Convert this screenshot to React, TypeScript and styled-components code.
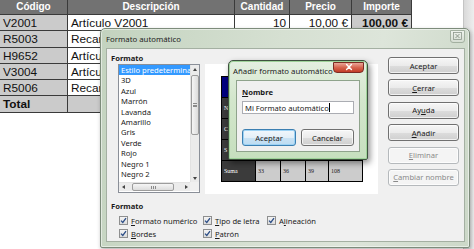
import styled, { createGlobalStyle } from "styled-components";

const Global = createGlobalStyle`
  html, body {
    margin: 0;
    padding: 0;
    background: #ffffff;
    overflow: hidden;
  }
`;

const ui = `"Noto Sans", "Open Sans", sans-serif`;

const Page = styled.div`
  position: relative;
  width: 474px;
  height: 249px;
  overflow: hidden;
  display: flex;
  font-family: "Liberation Sans", Arial, sans-serif;
`;

const SheetArea = styled.div`
  flex: 1;
  background: #fff;
`;

const EdgeStrip = styled.div`
  width: 10px;
  background: linear-gradient(90deg, #d9d9d9, #eeeeee);
  border-left: 1px solid #c4c4c4;
`;

const Sheet = styled.div`
  display: grid;
  grid-template-columns: 68px 167px 55px 62px 60px;
  grid-template-rows: 15px 16px 17px 16px 16px 16px 17px;
  width: 412px;
`;

const Cell = styled.div<{ $kind?: "head" | "gray" | "white"; $align?: "left" | "right" | "center"; $bold?: boolean }>`
  box-sizing: border-box;
  border-right: 1px solid #3a3a3a;
  border-bottom: 1px solid #3a3a3a;
  background: ${(p) => (p.$kind === "head" ? "#727272" : p.$kind === "gray" ? "#cbcbcb" : "#ffffff")};
  color: ${(p) => (p.$kind === "head" ? "#ffffff" : "#111111")};
  font-size: ${(p) => (p.$kind === "head" ? "10px" : "11.8px")};
  font-weight: ${(p) => (p.$bold || p.$kind === "head" ? 700 : 400)};
  text-align: ${(p) => p.$align || "left"};
  padding: 0 3px;
  line-height: ${(p) => (p.$kind === "head" ? "14px" : "16px")};
  white-space: nowrap;
  overflow: hidden;
`;

/* ---------- dialog windows ---------- */

const Window = styled.div<{ $left: number; $top: number; $w: number; $h: number; $active?: boolean }>`
  position: absolute;
  left: ${(p) => p.$left}px;
  top: ${(p) => p.$top}px;
  width: ${(p) => p.$w}px;
  height: ${(p) => p.$h}px;
  box-sizing: border-box;
  display: flex;
  flex-direction: column;
  border: 1px solid ${(p) => (p.$active ? "#3f523f" : "#7d8c7b")};
  border-radius: 5px 5px 2px 2px;
  background: ${(p) =>
    p.$active
      ? "linear-gradient(180deg, #e4efe0 0%, #d3e6cc 40%, #c6dfbe 100%)"
      : "linear-gradient(100deg, #c3d3bf 0%, #d6e0d2 45%, #dde5da 70%, #ccd8c8 100%)"};
  box-shadow: ${(p) =>
    p.$active
      ? "inset 0 0 0 1px #9fd39a, 2px 3px 6px rgba(0,0,0,0.45)"
      : "inset 0 0 0 1px rgba(255,255,255,0.5), 1px 2px 4px rgba(0,0,0,0.3)"};
  font-family: ${ui};
  font-size: 7.6px;
  color: #1a1a1a;
`;

const TitleBar = styled.div<{ $pad: number }>`
  height: 19px;
  flex-shrink: 0;
  display: flex;
  align-items: center;
  justify-content: space-between;
  padding-left: ${(p) => p.$pad}px;
  padding-right: 3px;
  font-size: 7.8px;
  color: #222;
`;

const GhostClose = styled.div`
  width: 15px;
  height: 13px;
  margin-top: -5px;
  margin-right: 1px;
  box-sizing: border-box;
  border: 1px solid #a3b0a0;
  border-radius: 0 0 3px 3px;
  background: linear-gradient(180deg, #eef2ec, #d6ded3);
  display: flex;
  align-items: center;
  justify-content: center;
`;

const RedClose = styled.div`
  width: 31px;
  height: 11px;
  margin-top: -7px;
  box-sizing: border-box;
  border: 1px solid #7b2b22;
  border-radius: 0 0 4px 4px;
  background: linear-gradient(180deg, #eaa698 0%, #d6654f 50%, #c23b25 100%);
  display: flex;
  align-items: center;
  justify-content: center;
`;

const MainBody = styled.div`
  flex: 1;
  margin: 0 4px 5px 5px;
  box-sizing: border-box;
  border: 1px solid #a4b0a2;
  background: #f0f0f0;
  display: flex;
`;

const LeftCol = styled.div`
  flex: 1;
  padding: 4px 0 0 4px;
  display: flex;
  flex-direction: column;
`;

const GroupLabel = styled.div`
  font-weight: 700;
  height: 11px;
  line-height: 11px;
`;

const TopRow = styled.div`
  display: flex;
  gap: 5px;
  margin-left: 7px;
`;

const ListBox = styled.div`
  width: 82px;
  height: 129px;
  box-sizing: border-box;
  border: 1px solid #8a8f98;
  background: #fff;
  display: grid;
  grid-template-columns: 71px 9px;
  grid-template-rows: 117px 9px;
`;

const Items = styled.div`
  overflow: hidden;
`;

const Item = styled.div<{ $sel?: boolean }>`
  height: 10.4px;
  line-height: 10.4px;
  padding-left: 2px;
  white-space: nowrap;
  overflow: hidden;
  background: ${(p) => (p.$sel ? "#3399ff" : "transparent")};
  color: ${(p) => (p.$sel ? "#fff" : "#1a1a1a")};
`;

const VScroll = styled.div`
  background: #ebebeb;
  border-left: 1px solid #e2e2e2;
  display: flex;
  flex-direction: column;
  align-items: center;
`;

const HScroll = styled.div`
  background: #ebebeb;
  border-top: 1px solid #e2e2e2;
  display: flex;
  align-items: center;
`;

const Corner = styled.div`
  background: #f0f0f0;
`;

const Arrow = styled.div<{ $dir: "up" | "down" | "left" | "right" }>`
  width: 9px;
  height: 9px;
  flex-shrink: 0;
  display: flex;
  align-items: center;
  justify-content: center;
  &::after {
    content: "";
    border: 2px solid transparent;
    ${(p) =>
      p.$dir === "up"
        ? "border-bottom: 3px solid #444; margin-top: -3px;"
        : p.$dir === "down"
        ? "border-top: 3px solid #444; margin-bottom: -3px;"
        : p.$dir === "left"
        ? "border-right: 3px solid #444; margin-left: -3px;"
        : "border-left: 3px solid #444; margin-right: -3px;"}
  }
`;

const Thumb = styled.div<{ $horiz?: boolean }>`
  box-sizing: border-box;
  border: 1px solid #9c9c9c;
  border-radius: 2px;
  background: ${(p) =>
    p.$horiz ? "linear-gradient(180deg, #f5f5f5, #dcdcdc)" : "linear-gradient(90deg, #f5f5f5, #dcdcdc)"};
  ${(p) => (p.$horiz ? "height: 8px; width: 42px; margin-left: 4px;" : "width: 8px; height: 60px; margin-top: 1px;")}
  display: flex;
  align-items: center;
  justify-content: center;
`;

const Grip = styled.div<{ $horiz?: boolean }>`
  ${(p) =>
    p.$horiz
      ? "width: 5px; height: 3px; border-left: 1px solid #8a8a8a; border-right: 1px solid #8a8a8a;"
      : "width: 4px; height: 4px; border-top: 1px solid #8a8a8a; border-bottom: 1px solid #8a8a8a;"}
  box-sizing: border-box;
  position: relative;
  &::after {
    content: "";
    position: absolute;
    background: #8a8a8a;
    ${(p) => (p.$horiz ? "left: 1px; top: 0; width: 1px; height: 3px;" : "top: 1px; left: 0; height: 1px; width: 4px;")}
  }
`;

const Track = styled.div`
  flex: 1;
`;

const Preview = styled.div`
  width: 173px;
  height: 130px;
  background: #fff;
  box-sizing: border-box;
  padding: 12px 0 0 16px;
`;

const PvGrid = styled.div`
  display: grid;
  grid-template-columns: 34px 25px 25px 23px 34px;
  grid-template-rows: repeat(5, 21px);
  width: 141px;
  border-top: 1px solid #000;
  border-left: 1px solid #000;
`;

const PvCell = styled.div<{ $kind: "head" | "side" | "body" }>`
  box-sizing: border-box;
  border-right: 1px solid #000;
  border-bottom: 1px solid #000;
  background: ${(p) => (p.$kind === "head" ? "#00007f" : p.$kind === "side" ? "#3b3b3b" : "#cccccc")};
  color: ${(p) => (p.$kind === "body" ? "#222" : "#fff")};
  font-family: "Liberation Serif", serif;
  font-size: 6px;
  padding: 0 2px;
  display: flex;
  align-items: center;
  overflow: hidden;
  white-space: nowrap;
`;

const FormatGroup = styled.div`
  margin-top: 7px;
`;

const Checks = styled.div`
  display: grid;
  grid-template-columns: 84px 64px auto;
  grid-auto-rows: 13px;
  margin-left: 8px;
  margin-top: 2px;
`;

const CheckRow = styled.label`
  display: flex;
  align-items: center;
  gap: 3px;
  white-space: nowrap;
`;

const Box = styled.span`
  width: 9px;
  height: 9px;
  box-sizing: border-box;
  border: 1px solid #8e8f8f;
  background: linear-gradient(180deg, #f4f4f4, #dcdcdc);
  display: flex;
  align-items: center;
  justify-content: center;
`;

const Mn = styled.span`
  text-decoration: underline;
`;

const ButtonCol = styled.div`
  width: 71px;
  margin-right: 5px;
  padding-top: 8px;
  display: flex;
  flex-direction: column;
  gap: 5.4px;
`;

const Btn = styled.div<{ $w?: number; $disabled?: boolean; $focus?: boolean }>`
  ${(p) => (p.$w ? `width: ${p.$w}px;` : "")}
  height: 17px;
  box-sizing: border-box;
  border: 1px solid ${(p) => (p.$disabled ? "#b5b9bc" : p.$focus ? "#3c7fb1" : "#707070")};
  border-radius: 3px;
  background: ${(p) =>
    p.$disabled
      ? "#f4f4f4"
      : p.$focus
      ? "linear-gradient(180deg, #f1f7fc 0%, #e3eff8 50%, #c9e2f4 51%, #bddcf2 100%)"
      : "linear-gradient(180deg, #f6f6f6 0%, #ebebeb 50%, #dddddd 51%, #cfcfcf 100%)"};
  box-shadow: inset 0 0 0 1px ${(p) => (p.$focus ? "#9cd2f4" : "rgba(255,255,255,0.7)")};
  color: ${(p) => (p.$disabled ? "#8a8a8a" : "#1a1a1a")};
  display: flex;
  align-items: center;
  justify-content: center;
  white-space: nowrap;
`;

/* ---------- child dialog ---------- */

const ChildBody = styled.div`
  flex: 1;
  margin: 0 7px 7px 7px;
  box-sizing: border-box;
  border: 1px solid #8fa38c;
  background: #f0f0f0;
  padding: 6px 5px 0 5px;
  display: flex;
  flex-direction: column;
`;

const Input = styled.div`
  margin-top: 3px;
  height: 13px;
  box-sizing: border-box;
  border: 1px solid #abadb3;
  background: #fff;
  padding-left: 2px;
  display: flex;
  align-items: center;
  white-space: nowrap;
`;

const Caret = styled.span`
  display: inline-block;
  width: 1px;
  height: 9px;
  background: #000;
  margin-left: 0.5px;
`;

const ChildButtons = styled.div`
  margin-top: 15px;
  display: flex;
  gap: 5px;
`;

const XIcon = ({ color, size, w }: { color: string; size: number; w: number }) => (
  <svg width={size} height={size} viewBox="0 0 10 10">
    <path d="M2 2 L8 8 M8 2 L2 8" stroke={color} strokeWidth={w} strokeLinecap="round" />
  </svg>
);

const BoxedX = () => (
  <svg width="9" height="8" viewBox="0 0 9 8">
    <rect x="0.5" y="0.5" width="8" height="7" fill="none" stroke="#8d978c" strokeWidth="0.8" />
    <path d="M2.5 2 L6.5 6 M6.5 2 L2.5 6" stroke="#8d978c" strokeWidth="1" />
  </svg>
);

const Tick = () => (
  <svg width="7" height="7" viewBox="0 0 7 7">
    <path d="M1 3.6 L2.8 5.4 L6 1.2" stroke="#2b4d86" strokeWidth="1.3" fill="none" />
  </svg>
);

const styles = [
  "Estilo predeterminado",
  "3D",
  "Azul",
  "Marrón",
  "Lavanda",
  "Amarillo",
  "Gris",
  "Verde",
  "Rojo",
  "Negro 1",
  "Negro 2",
  "Turquesa",
];

const rows = [
  ["V2001", "Artículo V2001", "10", "10,00 €", "100,00 €"],
  ["R5003", "Recambio R5003", "5", "4,00 €", "20,00 €"],
  ["H9652", "Artículo H9652", "2", "8,00 €", "16,00 €"],
  ["V3004", "Artículo V3004", "1", "12,00 €", "12,00 €"],
  ["R5006", "Recambio R5006", "3", "5,00 €", "15,00 €"],
];

// only the parts of the sample that are not hidden by the child dialog carry text
const pvRows = [
  ["", "", "", "", ""],
  ["N", "", "", "", ""],
  ["C", "", "", "", ""],
  ["S", "", "", "", ""],
  ["Suma", "33", "36", "39", "108"],
];

export default function App() {
  return (
    <>
      <Global />
      <Page>
        <SheetArea>
          <Sheet>
            {["Código", "Descripción", "Cantidad", "Precio", "Importe"].map((h) => (
              <Cell key={h} $kind="head" $align="center">
                {h}
              </Cell>
            ))}
            {rows.map((r) => [
              <Cell key={r[0] + "a"} $kind="gray">{r[0]}</Cell>,
              <Cell key={r[0] + "b"}>{r[1]}</Cell>,
              <Cell key={r[0] + "c"} $align="right">{r[2]}</Cell>,
              <Cell key={r[0] + "d"} $align="right">{r[3]}</Cell>,
              <Cell key={r[0] + "e"} $kind="gray" $align="right" $bold>{r[4]}</Cell>,
            ])}
            <Cell $kind="gray" $bold>Total</Cell>
            <Cell $kind="gray" />
            <Cell $kind="gray" />
            <Cell $kind="gray" />
            <Cell $kind="gray" $align="right" $bold>163,00 €</Cell>
          </Sheet>
        </SheetArea>
        <EdgeStrip />

        <Window $left={100} $top={28} $w={370} $h={220}>
          <TitleBar $pad={5}>
            <span>Formato automático</span>
            <GhostClose>
              <BoxedX />
            </GhostClose>
          </TitleBar>
          <MainBody>
            <LeftCol>
              <GroupLabel>Formato</GroupLabel>
              <TopRow>
                <ListBox>
                  <Items>
                    {styles.map((s, i) => (
                      <Item key={s} $sel={i === 0}>
                        {s}
                      </Item>
                    ))}
                  </Items>
                  <VScroll>
                    <Arrow $dir="up" />
                    <Thumb>
                      <Grip />
                    </Thumb>
                    <Track />
                    <Arrow $dir="down" />
                  </VScroll>
                  <HScroll>
                    <Arrow $dir="left" />
                    <Thumb $horiz>
                      <Grip $horiz />
                    </Thumb>
                    <Track />
                    <Arrow $dir="right" />
                  </HScroll>
                  <Corner />
                </ListBox>
                <Preview>
                  <PvGrid>
                    {pvRows.map((r, ri) =>
                      r.map((c, ci) => (
                        <PvCell
                          key={ri + "-" + ci}
                          $kind={ri === 0 ? "head" : ci === 0 ? "side" : "body"}
                        >
                          {c}
                        </PvCell>
                      ))
                    )}
                  </PvGrid>
                </Preview>
              </TopRow>
              <FormatGroup>
                <GroupLabel>Formato</GroupLabel>
                <Checks>
                  <CheckRow>
                    <Box><Tick /></Box>
                    <span><Mn>F</Mn>ormato numérico</span>
                  </CheckRow>
                  <CheckRow>
                    <Box><Tick /></Box>
                    <span><Mn>T</Mn>ipo de letra</span>
                  </CheckRow>
                  <CheckRow>
                    <Box><Tick /></Box>
                    <span>A<Mn>l</Mn>ineación</span>
                  </CheckRow>
                  <CheckRow>
                    <Box><Tick /></Box>
                    <span><Mn>B</Mn>ordes</span>
                  </CheckRow>
                  <CheckRow>
                    <Box><Tick /></Box>
                    <span><Mn>P</Mn>atrón</span>
                  </CheckRow>
                </Checks>
              </FormatGroup>
            </LeftCol>
            <ButtonCol>
              <Btn>Aceptar</Btn>
              <Btn><Mn>C</Mn>errar</Btn>
              <Btn>Ay<Mn>u</Mn>da</Btn>
              <Btn><Mn>A</Mn>ñadir</Btn>
              <Btn $disabled><Mn>E</Mn>liminar</Btn>
              <Btn $disabled><Mn>C</Mn>ambiar nombre</Btn>
            </ButtonCol>
          </MainBody>
        </Window>

        <Window $left={228} $top={60} $w={140} $h={100} $active>
          <TitleBar $pad={4}>
            <span>Añadir formato automático</span>
            <RedClose>
              <XIcon color="#ffffff" size={8} w={1.8} />
            </RedClose>
          </TitleBar>
          <ChildBody>
            <GroupLabel>
              <Mn>N</Mn>ombre
            </GroupLabel>
            <Input>
              Mi Formato automático
              <Caret />
            </Input>
            <ChildButtons>
              <Btn $w={54} $focus>Aceptar</Btn>
              <Btn $w={53}>Cancelar</Btn>
            </ChildButtons>
          </ChildBody>
        </Window>
      </Page>
    </>
  );
}
